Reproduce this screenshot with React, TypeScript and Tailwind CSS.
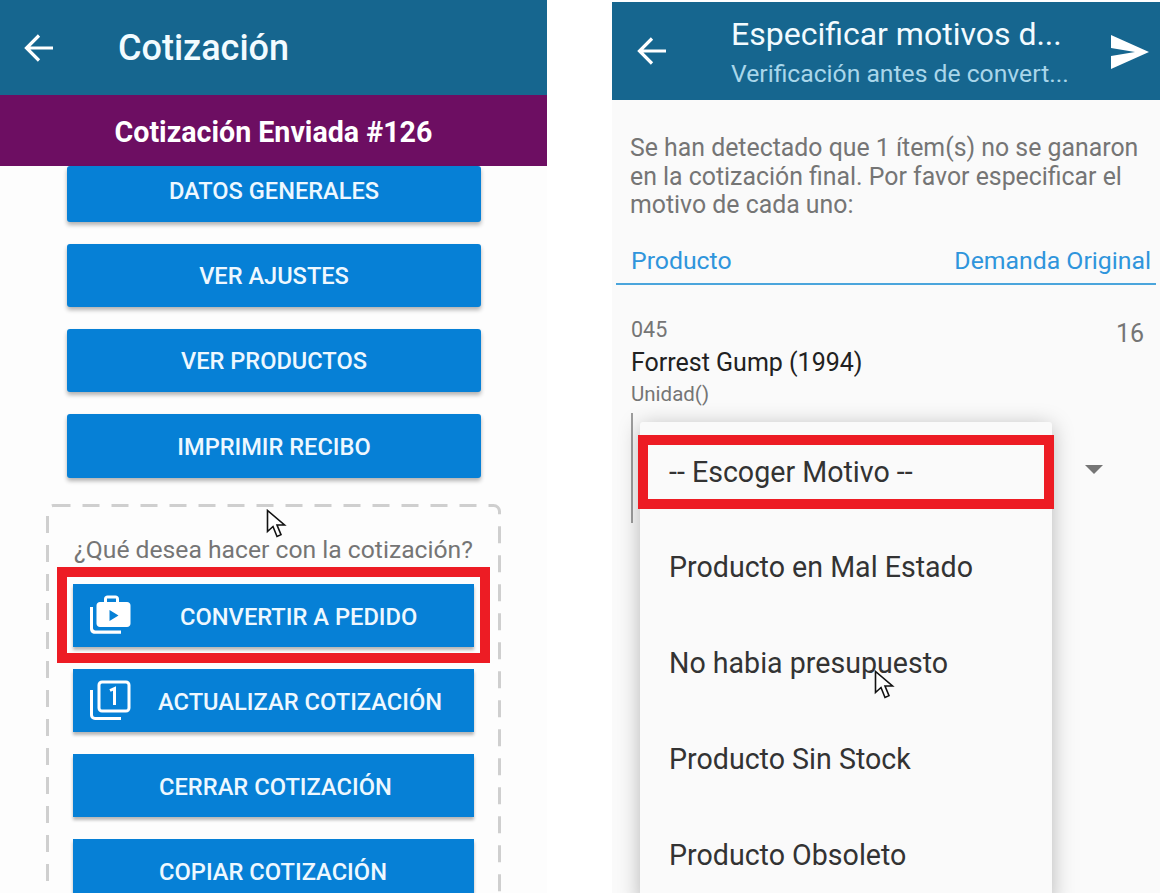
import React from 'react';

const Arrow = () => (
  <svg width="32" height="30" viewBox="0 0 32 30" fill="none" stroke="white" strokeWidth="3.2">
    <path d="M30 15H4M16 2.5 3.5 15 16 27.5" />
  </svg>
);

const Cursor = () => (
  <svg width="21" height="31" viewBox="0 0 21 31" fill="white" stroke="#111" strokeWidth="1.6">
    <path d="M1.5 1.5v21l5.5-5 4 10 4-1.8-4-9.7h7.5z" />
  </svg>
);

const BagIcon = () => (
  <svg width="42" height="40" viewBox="0 0 42 40" fill="white">
    <path d="M1 12h3v21c0 1.5 1 2.500 2.500 2.500H32v3.200H6c-3 0-5-2-5-5z" />
    <path fillRule="evenodd" d="M15 7V4c0-2 1.500-3.500 3.500-3.500h8C28.500.5 30 2 30 4v3h8c2 0 3.500 1.500 3.500 3.500v18c0 2-1.500 3.500-3.500 3.500H11c-2 0-3.500-1.500-3.500-3.500v-18C7.500 8.500 9 7 11 7zm3 0h9V3.500h-9zm2.500 8v11l9-5.500z" />
  </svg>
);

const CopyOneIcon = () => (
  <svg width="42" height="42" viewBox="0 0 42 42" fill="none" stroke="white" strokeWidth="3">
    <path d="M2.500 10v25c0 2 1.500 3.500 3.500 3.500h26" />
    <rect x="10" y="2" width="30" height="29" rx="3" />
    <path d="M21 10.500 25.500 8.500V25" />
  </svg>
);

const TopButton = ({ label, className }: { label: string; className: string }) => (
  <div className={`ml-[67px] mr-[66px] flex shrink-0 items-center justify-center rounded-[3px] bg-[#0680d6] text-[23.6px] font-medium text-[#eef8ff] shadow-[0_3px_4px_rgba(0,0,0,0.3)] ${className}`}>
    {label}
  </div>
);

const ActionButton = ({ label, icon, textClass }: { label: string; icon?: React.ReactNode; textClass: string }) => (
  <div className="relative mx-[27px] flex h-[63px] shrink-0 items-center bg-[#0680d6] pt-[4px] text-[23.7px] font-medium text-[#eef8ff] shadow-[0_3px_3px_rgba(0,0,0,0.28)]">
    {icon && <span className="absolute left-[16px] top-[11px]">{icon}</span>}
    <span className={textClass}>{label}</span>
  </div>
);

const options = ['Producto en Mal Estado', 'No habia presupuesto', 'Producto Sin Stock', 'Producto Obsoleto'];

export default function App() {
  return (
    <div className="relative flex h-[893px] w-[1164px] overflow-hidden bg-white font-['Roboto',sans-serif]">
      {/* Left phone */}
      <div className="relative flex h-[893px] w-[547px] shrink-0 flex-col overflow-hidden bg-[#fdfdfd]">
        <div className="flex h-[95px] shrink-0 items-center bg-[#16668f] pl-[23px]">
          <Arrow />
          <span className="ml-[63px] text-[36px] font-medium text-[#f2fbff]">Cotización</span>
        </div>
        <div className="flex h-[71px] shrink-0 items-center justify-center bg-[#6d0e62] pt-[4px] text-[28.6px] font-bold text-white">
          Cotización Enviada #126
        </div>
        <TopButton label="DATOS GENERALES" className="h-[56px] pb-[4px]" />
        <TopButton label="VER AJUSTES" className="mt-[22px] h-[63px] pt-[3px]" />
        <TopButton label="VER PRODUCTOS" className="mt-[22px] h-[63px] pt-[3px]" />
        <TopButton label="IMPRIMIR RECIBO" className="mt-[22px] h-[64px] pt-[3px]" />
        <div className="relative ml-[46px] mt-[26px] flex h-[500px] w-[455px] shrink-0 flex-col gap-[22px] pt-[32px]">
          <svg className="absolute inset-0" width="455" height="500" fill="none" stroke="#cfcfcf" strokeWidth="3">
            <rect x="1.500" y="1.500" width="452" height="497" rx="6" strokeDasharray="17 12" />
          </svg>
          <p className="relative -mb-[2px] h-[28px] text-center text-[24.7px] leading-[28px] text-[#757575]">¿Qué desea hacer con la cotización?</p>
          <ActionButton label="CONVERTIR A PEDIDO" icon={<BagIcon />} textClass="ml-[107px]" />
          <ActionButton label="ACTUALIZAR COTIZACIÓN" icon={<CopyOneIcon />} textClass="ml-[85px]" />
          <ActionButton label="CERRAR COTIZACIÓN" textClass="ml-[86px]" />
          <ActionButton label="COPIAR COTIZACIÓN" textClass="ml-[86px]" />
        </div>
        <div className="absolute left-[57px] top-[567px] h-[96px] w-[433px] border-[10px] border-[#ed1c24]" />
        <div className="absolute left-[266px] top-[509px]"><Cursor /></div>
      </div>

      {/* Right phone */}
      <div className="relative ml-[65px] mt-[2px] flex h-[891px] w-[548px] shrink-0 flex-col overflow-hidden bg-[#fafafa]">
        <div className="relative flex h-[98px] shrink-0 items-center bg-[#16668f] pl-[24px]">
          <Arrow />
          <div className="ml-[63px] flex flex-col">
            <span className="translate-y-[1px] text-[32px] leading-[38px] text-[#f2fbff]">Especificar motivos d...</span>
            <span className="mt-[8px] text-[24.7px] leading-[28px] text-[#a9d6ea]">Verificación antes de convert...</span>
          </div>
          <svg className="absolute left-[499px] top-[33px]" width="38" height="34" viewBox="0 0 38 34" fill="white">
            <path d="M0 0 38 17 0 34V21L24 17 0 13z" />
          </svg>
        </div>
        <p className="ml-[18px] mt-[34px] w-[525px] text-[24.85px] leading-[28.500px] text-[#757575]">
          Se han detectado que 1 ítem(s) no se ganaron en la cotización final. Por favor especificar el motivo de cada uno:
        </p>
        <div className="mx-[4px] mt-[26px] flex h-[39px] shrink-0 items-start justify-between border-b-2 border-[#4aa5dc] pl-[15px] pr-[5px] text-[24.8px] leading-[30px] text-[#2f95dc]">
          <span>Producto</span>
          <span>Demanda Original</span>
        </div>
        <div className="ml-[19px] mr-[16px] mt-[33px] flex items-start justify-between">
          <div className="flex flex-col">
            <span className="text-[21.5px] leading-[24px] text-[#757575]">045</span>
            <span className="mt-[6px] text-[25px] leading-[30px] text-[#212121]">Forrest Gump (1994)</span>
            <span className="mt-[4px] text-[20.5px] leading-[24px] text-[#757575]">Unidad()</span>
          </div>
          <span className="mt-[1px] text-[25px] leading-[30px] text-[#757575]">16</span>
        </div>
        <div className="ml-[19px] mt-[7px] h-[110px] w-[2px] shrink-0 bg-[#9e9e9e]" />
        {/* caret of the closed select */}
        <div className="absolute left-[473px] top-[463px] h-0 w-0 border-x-[9px] border-t-[9px] border-x-transparent border-t-[#757575]" />
        {/* open dropdown */}
        <div className="absolute left-[28px] top-[420px] h-[480px] w-[412px] rounded-[3px] bg-[#fafafa] pl-[29px] shadow-[0_4px_22px_rgba(0,0,0,0.28)]">
          <div className="flex h-[97px] items-center pt-[3px] text-[28.6px] text-[#333333]">-- Escoger Motivo --</div>
          {options.map((option) => (
            <div key={option} className="flex h-[96px] items-center text-[28.6px] text-[#333333]">{option}</div>
          ))}
        </div>
        <div className="absolute left-[26px] top-[433px] h-[74px] w-[416px] border-[10px] border-[#ed1c24]" />
        <div className="absolute left-[262px] top-[668px]"><Cursor /></div>
      </div>
    </div>
  );
}
